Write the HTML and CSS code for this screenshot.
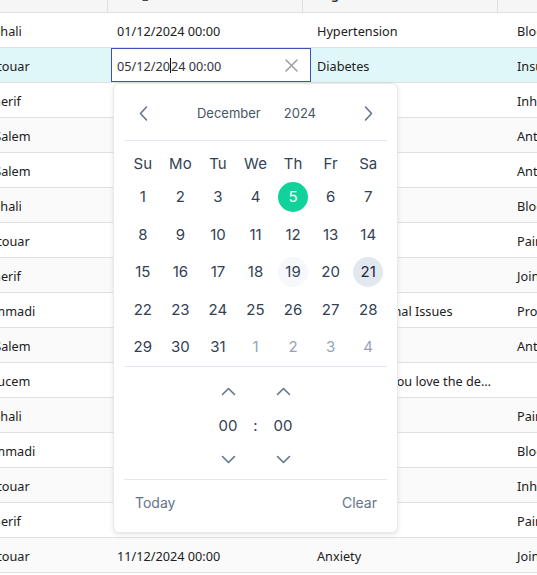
FILE: index.html
```html
<!DOCTYPE html>
<html lang="en">
<head>
<meta charset="utf-8">
<title>Patients</title>
<link rel="stylesheet" href="styles.css">
</head>
<body>
<div class="viewport">
  <div class="grid">
    <div class="row head">
      <div class="hc c1">patient_name</div>
      <div class="hc c2">visit_date</div>
      <div class="hc c3">diagnosis</div>
      <div class="hc c4">medication</div>
    </div>
    <div class="row">
      <div class="cell c1">Ahmed Benhali</div>
      <div class="cell c2">01/12/2024 00:00</div>
      <div class="cell c3">Hypertension</div>
      <div class="cell c4">Blood pressure medication</div>
    </div>
    <div class="row selected">
      <div class="cell c1">Youcef Bentouar</div>
      <div class="cell c2 editing">
        <div class="date-input">
          <span class="val">05/12/20<span class="caret"></span>24 00:00</span>
          <svg class="clear" width="13" height="13" viewBox="0 0 13 13"><path d="M1 1 L12 12 M12 1 L1 12" stroke="#9e9e9e" stroke-width="1.5" fill="none" stroke-linecap="round"/></svg>
        </div>
      </div>
      <div class="cell c3">Diabetes</div>
      <div class="cell c4">Insulin</div>
    </div>
    <div class="row">
      <div class="cell c1">Mokhtar Cherif</div>
      <div class="cell c2">02/12/2024 00:00</div>
      <div class="cell c3">Asthma</div>
      <div class="cell c4">Inhaler</div>
    </div>
    <div class="row alt">
      <div class="cell c1">Mustapha Salem</div>
      <div class="cell c2">03/12/2024 00:00</div>
      <div class="cell c3">Bronchitis</div>
      <div class="cell c4">Antibiotics</div>
    </div>
    <div class="row">
      <div class="cell c1">Mustapha Salem</div>
      <div class="cell c2">04/12/2024 00:00</div>
      <div class="cell c3">Infection</div>
      <div class="cell c4">Antibiotics</div>
    </div>
    <div class="row alt">
      <div class="cell c1">Ahmed Benhali</div>
      <div class="cell c2">06/12/2024 00:00</div>
      <div class="cell c3">Cholesterol</div>
      <div class="cell c4">Blood pressure medication</div>
    </div>
    <div class="row">
      <div class="cell c1">Youcef Bentouar</div>
      <div class="cell c2">07/12/2024 00:00</div>
      <div class="cell c3">Migraine</div>
      <div class="cell c4">Painkillers</div>
    </div>
    <div class="row alt">
      <div class="cell c1">Mokhtar Cherif</div>
      <div class="cell c2">08/12/2024 00:00</div>
      <div class="cell c3">Arthritis</div>
      <div class="cell c4">Joint supplements</div>
    </div>
    <div class="row">
      <div class="cell c1">Karima Hammadi</div>
      <div class="cell c2">09/12/2024 00:00</div>
      <div class="cell c3">Gastrointestinal Issues</div>
      <div class="cell c4">Probiotics</div>
    </div>
    <div class="row alt">
      <div class="cell c1">Mustapha Salem</div>
      <div class="cell c2">10/12/2024 00:00</div>
      <div class="cell c3">Pneumonia</div>
      <div class="cell c4">Antibiotics</div>
    </div>
    <div class="row">
      <div class="cell c1">Rachida Boucem</div>
      <div class="cell c2">12/12/2024 00:00</div>
      <div class="cell c3 long">Hi there, do you love the design of this table?</div>
      <div class="cell c4"></div>
    </div>
    <div class="row alt">
      <div class="cell c1">Ahmed Benhali</div>
      <div class="cell c2">13/12/2024 00:00</div>
      <div class="cell c3">Back Pain</div>
      <div class="cell c4">Painkillers</div>
    </div>
    <div class="row">
      <div class="cell c1">Karima Hammadi</div>
      <div class="cell c2">14/12/2024 00:00</div>
      <div class="cell c3">Stroke</div>
      <div class="cell c4">Blood thinners</div>
    </div>
    <div class="row alt">
      <div class="cell c1">Youcef Bentouar</div>
      <div class="cell c2">15/12/2024 00:00</div>
      <div class="cell c3">Asthma</div>
      <div class="cell c4">Inhaler</div>
    </div>
    <div class="row">
      <div class="cell c1">Mokhtar Cherif</div>
      <div class="cell c2">16/12/2024 00:00</div>
      <div class="cell c3">Migraine</div>
      <div class="cell c4">Painkillers</div>
    </div>
    <div class="row alt">
      <div class="cell c1">Youcef Bentouar</div>
      <div class="cell c2">11/12/2024 00:00</div>
      <div class="cell c3">Anxiety</div>
      <div class="cell c4">Joint supplements</div>
    </div>
    <div class="row">
      <div class="cell c1">Mustapha Salem</div>
      <div class="cell c2">17/12/2024 00:00</div>
      <div class="cell c3">Diabetes</div>
      <div class="cell c4">Insulin</div>
    </div>
  </div>

  <div class="datepicker">
    <div class="dp-header">
      <button class="nav" aria-label="Previous month">
        <svg width="9" height="15" viewBox="0 0 9 15"><path d="M7.5 1 L1.5 7.5 L7.5 14" stroke="#64748b" stroke-width="1.6" fill="none" stroke-linecap="round" stroke-linejoin="round"/></svg>
      </button>
      <div class="title"><span>December</span><span>2024</span></div>
      <button class="nav" aria-label="Next month">
        <svg width="9" height="15" viewBox="0 0 9 15"><path d="M1.5 1 L7.5 7.5 L1.5 14" stroke="#64748b" stroke-width="1.6" fill="none" stroke-linecap="round" stroke-linejoin="round"/></svg>
      </button>
    </div>
    <div class="dp-grid">
      <span class="wd">Su</span><span class="wd">Mo</span><span class="wd">Tu</span><span class="wd">We</span><span class="wd">Th</span><span class="wd">Fr</span><span class="wd">Sa</span>
      <span class="day"><span>1</span></span><span class="day"><span>2</span></span><span class="day"><span>3</span></span><span class="day"><span>4</span></span><span class="day sel"><span>5</span></span><span class="day"><span>6</span></span><span class="day"><span>7</span></span>
      <span class="day"><span>8</span></span><span class="day"><span>9</span></span><span class="day"><span>10</span></span><span class="day"><span>11</span></span><span class="day"><span>12</span></span><span class="day"><span>13</span></span><span class="day"><span>14</span></span>
      <span class="day"><span>15</span></span><span class="day"><span>16</span></span><span class="day"><span>17</span></span><span class="day"><span>18</span></span><span class="day hover"><span>19</span></span><span class="day"><span>20</span></span><span class="day today"><span>21</span></span>
      <span class="day"><span>22</span></span><span class="day"><span>23</span></span><span class="day"><span>24</span></span><span class="day"><span>25</span></span><span class="day"><span>26</span></span><span class="day"><span>27</span></span><span class="day"><span>28</span></span>
      <span class="day"><span>29</span></span><span class="day"><span>30</span></span><span class="day"><span>31</span></span><span class="day other"><span>1</span></span><span class="day other"><span>2</span></span><span class="day other"><span>3</span></span><span class="day other"><span>4</span></span>
    </div>
    <div class="dp-time">
      <div class="tcol">
        <button class="tbtn" aria-label="Increment hour"><svg width="15" height="9" viewBox="0 0 15 9"><path d="M1.5 7.5 L7.5 1.5 L13.5 7.5" stroke="#64748b" stroke-width="1.6" fill="none" stroke-linecap="round" stroke-linejoin="round"/></svg></button>
        <span class="tval">00</span>
        <button class="tbtn" aria-label="Decrement hour"><svg width="15" height="9" viewBox="0 0 15 9"><path d="M1.5 1.5 L7.5 7.5 L13.5 1.5" stroke="#64748b" stroke-width="1.6" fill="none" stroke-linecap="round" stroke-linejoin="round"/></svg></button>
      </div>
      <div class="tsep">:</div>
      <div class="tcol">
        <button class="tbtn" aria-label="Increment minute"><svg width="15" height="9" viewBox="0 0 15 9"><path d="M1.5 7.5 L7.5 1.5 L13.5 7.5" stroke="#64748b" stroke-width="1.6" fill="none" stroke-linecap="round" stroke-linejoin="round"/></svg></button>
        <span class="tval">00</span>
        <button class="tbtn" aria-label="Decrement minute"><svg width="15" height="9" viewBox="0 0 15 9"><path d="M1.5 1.5 L7.5 7.5 L13.5 1.5" stroke="#64748b" stroke-width="1.6" fill="none" stroke-linecap="round" stroke-linejoin="round"/></svg></button>
      </div>
    </div>
    <div class="dp-footer">
      <button class="fbtn today-btn">Today</button>
      <button class="fbtn clear-btn">Clear</button>
    </div>
  </div>
</div>
</body>
</html>
```

FILE: styles.css
```css
body {
  margin: 0;
  font-family: "Noto Sans", "Open Sans", sans-serif;
  background: #fff;
}

.viewport {
  width: 537px;
  height: 575px;
  overflow: hidden;
  position: relative;
  background: #fff;
}

/* ---------- data grid ---------- */
.grid {
  margin-top: -22px;
  margin-left: -76px;
  width: max-content;
  font-size: 12.7px;
  color: #212121;
}

.row {
  display: flex;
  height: 34px;
  border-bottom: 1px solid #e0e0e0;
}

.row.alt {
  background: #fafafa;
}

.row.selected {
  background: #e0f7fa;
}

.cell {
  box-sizing: border-box;
  padding: 2px 7px 0;
  line-height: 32px;
  white-space: nowrap;
  overflow: hidden;
  text-overflow: ellipsis;
}

.cell.long {
  padding-right: 18px;
}

.c1 { width: 186px; }
.c2, .c3, .c4 { width: 200px; }

.head {
  background: #f6f6f6;
}

.hc {
  box-sizing: border-box;
  padding: 0 9px 2px;
  line-height: 32px;
  border-right: 1px solid #e0e0e0;
  font-weight: 600;
  color: #333;
  white-space: nowrap;
  overflow: hidden;
}

.head .c1 { width: 184px; }
.head .c2 { width: 195px; }
.head .c3 { width: 195px; }
.head .c4 { width: 200px; }

.cell.editing {
  padding: 0;
  overflow: visible;
}

.date-input {
  box-sizing: border-box;
  margin-left: 1px;
  width: 200px;
  height: 34px;
  border: 1px solid #3f51b5;
  background: #fff;
  display: flex;
  align-items: center;
  justify-content: space-between;
  padding: 1px 12px 0 5px;
  color: #333;
}

.val {
  display: flex;
  align-items: center;
  line-height: 20px;
}

.caret {
  display: inline-block;
  width: 1px;
  height: 15px;
  background: #111;
}

.clear {
  display: block;
}

/* ---------- date picker popover ---------- */
.datepicker {
  position: absolute;
  left: 113px;
  top: 83px;
  width: 285px;
  height: 450px;
  box-sizing: border-box;
  background: #fff;
  border: 1px solid #e6e9ee;
  border-radius: 6px;
  box-shadow: 0 2px 6px rgba(15, 23, 42, 0.08), 0 1px 2px rgba(15, 23, 42, 0.05);
  padding: 7px 10px 8px;
  font-family: Inter, "Noto Sans", sans-serif;
  color: #334155;
  display: flex;
  flex-direction: column;
}

.dp-header {
  display: flex;
  align-items: center;
  justify-content: space-between;
  height: 44px;
  padding: 0 3px 5px;
  border-bottom: 1px solid #e2e8f0;
}

.nav, .tbtn, .fbtn {
  border: none;
  background: none;
  padding: 0;
  margin: 0;
  font: inherit;
  cursor: pointer;
}

.nav {
  width: 32px;
  height: 32px;
  display: flex;
  align-items: center;
  justify-content: center;
}

.title {
  display: flex;
  gap: 23px;
  font-size: 13px;
  color: #475569;
  padding-left: 2px;
}

.dp-grid {
  display: grid;
  grid-template-columns: repeat(7, 1fr);
  grid-template-rows: 30px repeat(5, 37.5px);
  margin-top: 7px;
  font-size: 15px;
}

.wd, .day {
  display: flex;
  align-items: center;
  justify-content: center;
}

.wd {
  color: #334155;
}

.day span {
  width: 30px;
  height: 30px;
  border-radius: 50%;
  display: flex;
  align-items: center;
  justify-content: center;
}

.day.sel span {
  background: #10d39b;
  color: #fff;
}

.day.hover span {
  background: #f6f8fb;
}

.day.today span {
  background: #e2e8f0;
  color: #1e293b;
}

.day.other {
  color: #94a3b8;
}

.dp-time {
  border-top: 1px solid #e2e8f0;
  display: flex;
  justify-content: center;
  padding: 9px 0 3px;
}

.tcol {
  display: flex;
  flex-direction: column;
  align-items: center;
  width: 32px;
}

.tbtn {
  width: 32px;
  height: 32px;
  display: flex;
  align-items: center;
  justify-content: center;
}

.tval {
  height: 36px;
  line-height: 36px;
  font-size: 15px;
  color: #334155;
}

.tsep {
  width: 23px;
  margin-top: 32px;
  height: 36px;
  line-height: 36px;
  text-align: center;
  font-size: 15px;
  color: #334155;
}

.dp-footer {
  flex: 1;
  border-top: 1px solid #e2e8f0;
  display: flex;
  align-items: center;
  justify-content: space-between;
  padding-top: 2px;
}

.fbtn {
  font-size: 14px;
  color: #64748b;
  height: 32px;
}

.today-btn {
  padding: 0 11px;
}

.clear-btn {
  padding: 0 10px;
}
```
